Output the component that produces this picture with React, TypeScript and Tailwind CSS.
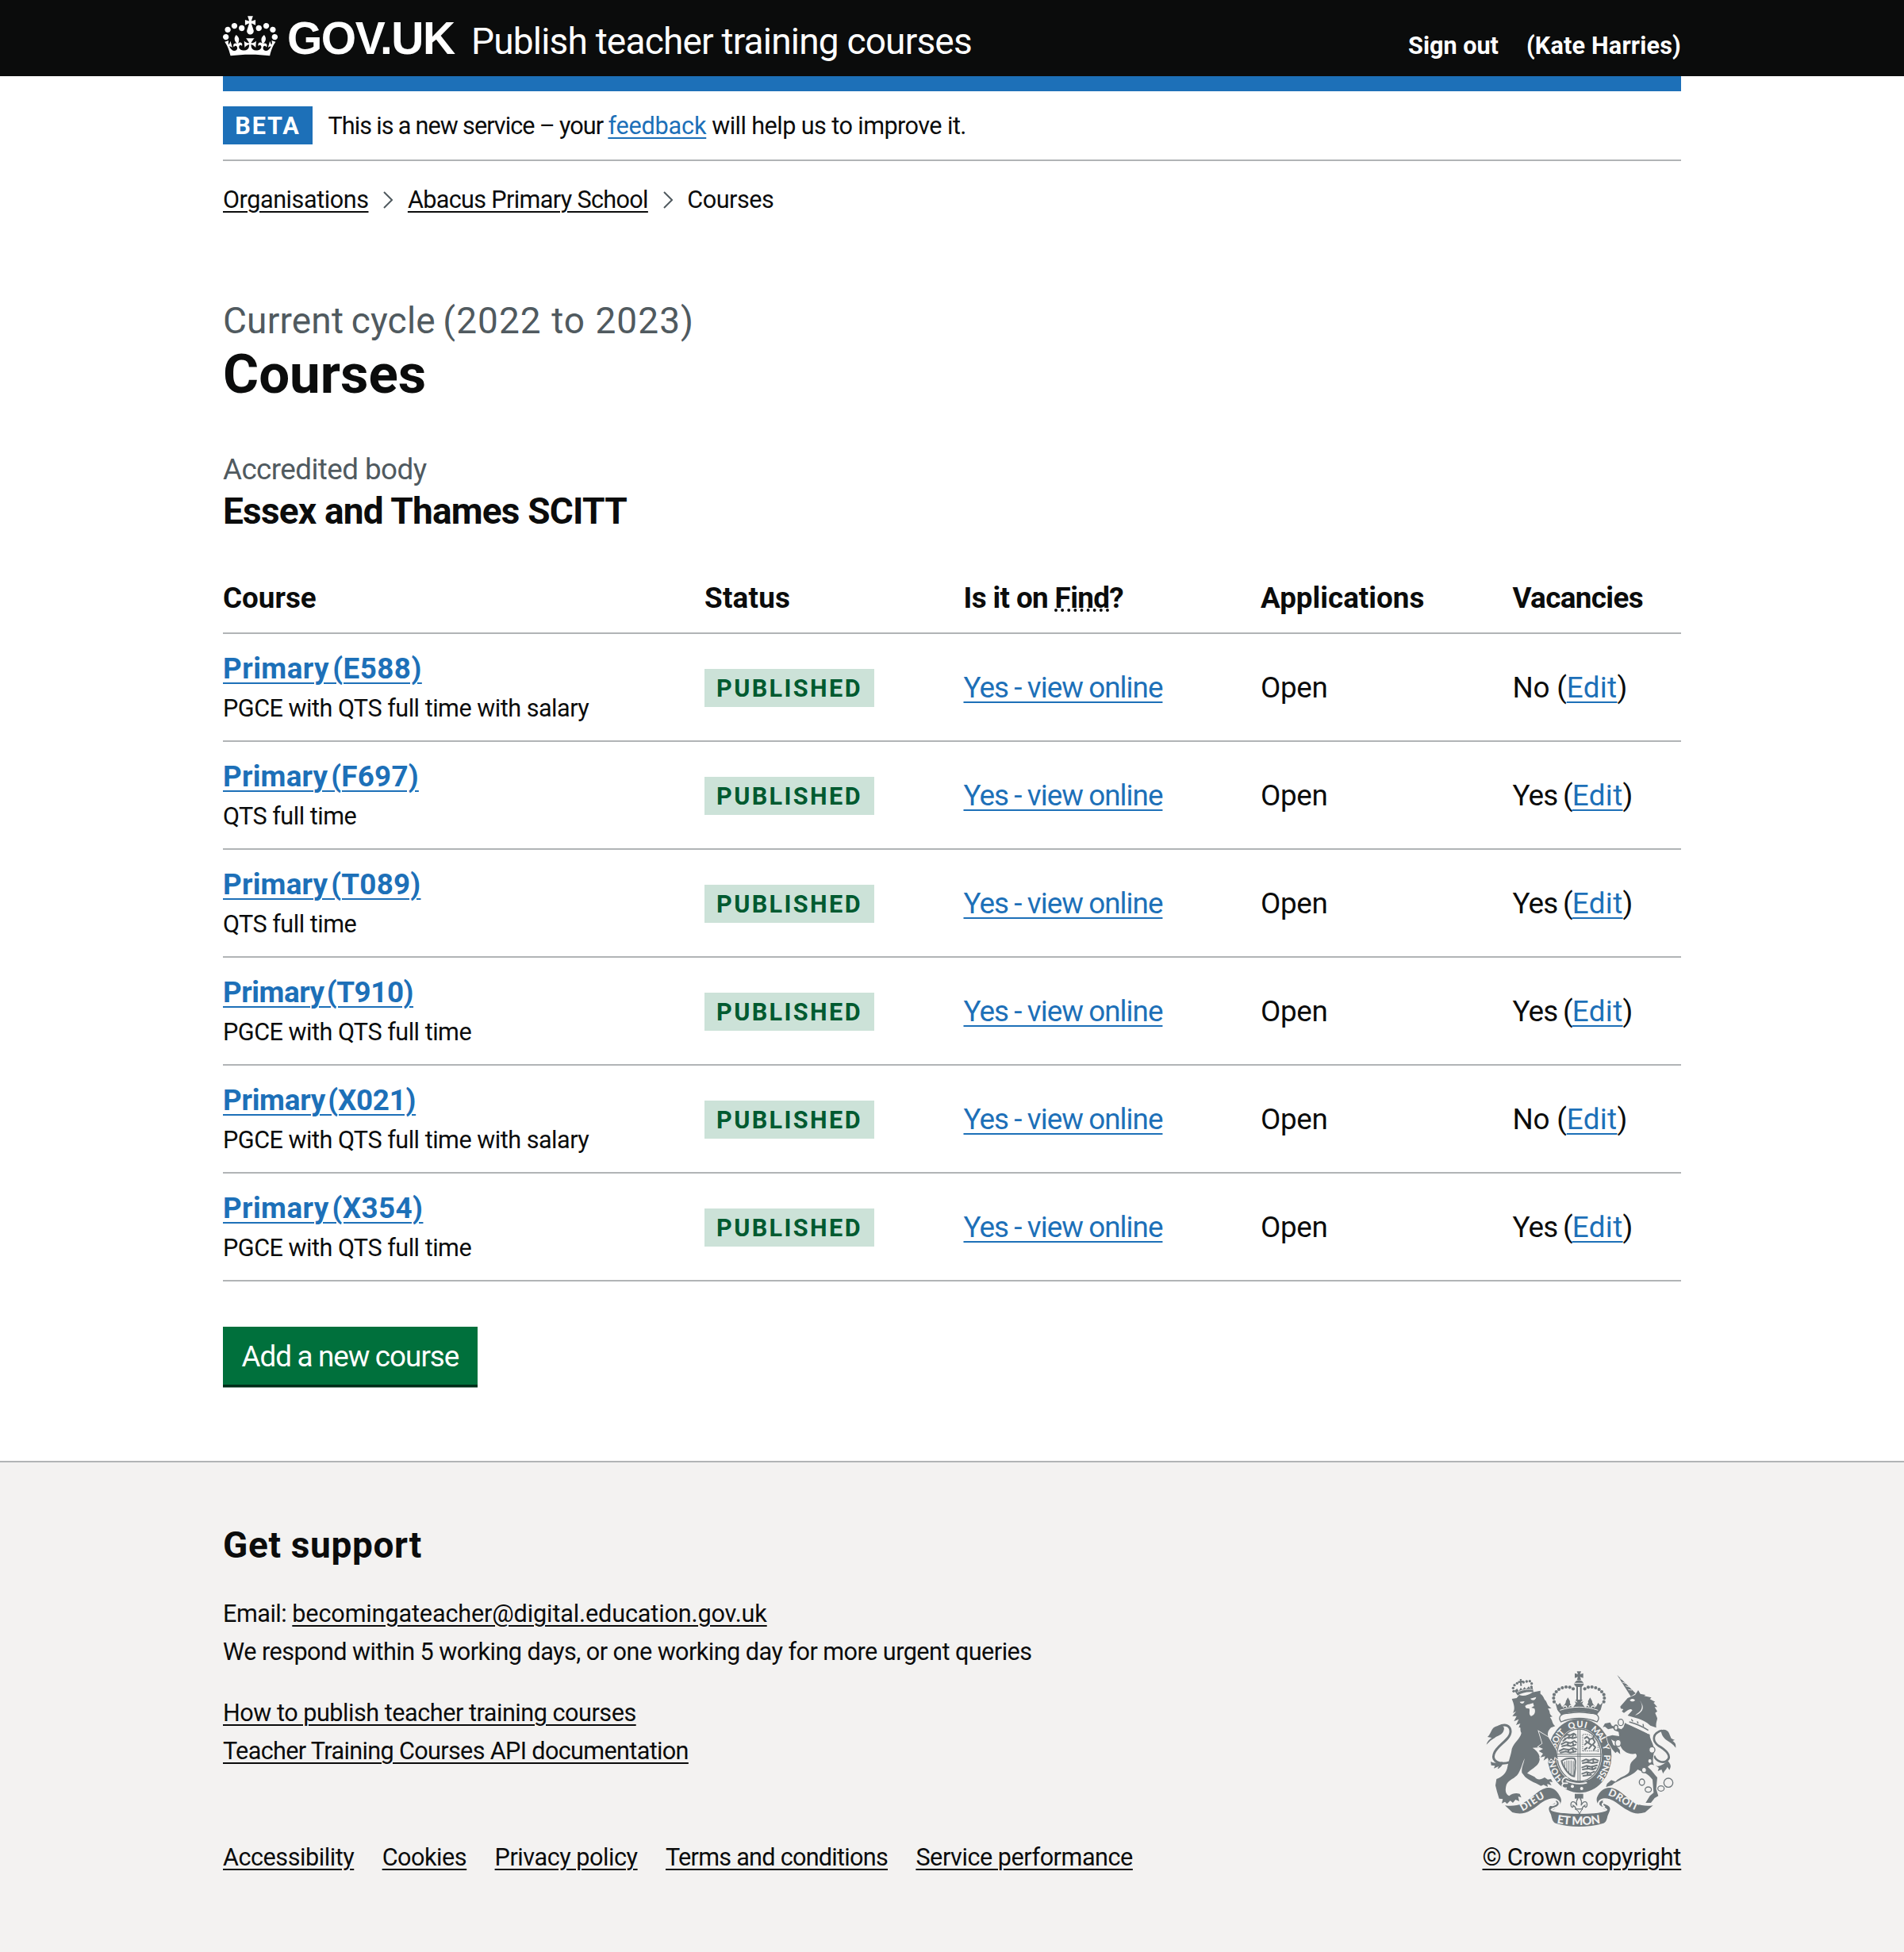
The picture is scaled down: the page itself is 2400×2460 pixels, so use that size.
import React from 'react';

const courses = [
  { name: 'Primary (E588)', tracking: 'tracking-[0.0127em]', detail: 'PGCE with QTS full time with salary', vacancies: 'No' },
  { name: 'Primary (F697)', tracking: 'tracking-[0.006em]', detail: 'QTS full time', vacancies: 'Yes' },
  { name: 'Primary (T089)', tracking: 'tracking-[0.006em]', detail: 'QTS full time', vacancies: 'Yes' },
  { name: 'Primary (T910)', tracking: 'tracking-[-0.0123em]', detail: 'PGCE with QTS full time', vacancies: 'Yes' },
  { name: 'Primary (X021)', tracking: 'tracking-[-0.0073em]', detail: 'PGCE with QTS full time with salary', vacancies: 'No' },
  { name: 'Primary (X354)', tracking: 'tracking-[0.0107em]', detail: 'PGCE with QTS full time', vacancies: 'Yes' },
];

const columns = 'grid grid-cols-[607px_326.5px_374.5px_317.5px_1fr]';
const link = 'underline decoration-2 underline-offset-[4px]';
const blueLink = 'text-[#1d70b8] underline decoration-2 underline-offset-[5px]';

function Crown() {
  return (
    <svg className="mt-5 h-[51px] w-[69px] shrink-0" viewBox="0 0 132 97" fill="white" aria-hidden="true">
      <path
        fillRule="evenodd"
        d="M25 30.2c3.5 1.5 7.7-.2 9.1-3.7 1.5-3.6-.2-7.8-3.9-9.2-3.6-1.4-7.6.3-9.1 3.9-1.4 3.5.3 7.5 3.9 9zM9 39.5c3.6 1.5 7.8-.2 9.2-3.7 1.5-3.6-.2-7.8-3.9-9.1-3.6-1.5-7.6.2-9.1 3.8-1.4 3.5.3 7.5 3.8 9zM4.4 57.2c3.5 1.5 7.7-.2 9.1-3.8 1.5-3.6-.2-7.7-3.9-9.1-3.5-1.5-7.6.3-9.1 3.8-1.4 3.5.3 7.6 3.9 9.1zm38.3-21.4c3.5 1.5 7.7-.2 9.1-3.8 1.5-3.6-.2-7.7-3.9-9.1-3.6-1.5-7.6.3-9.1 3.8-1.3 3.6.4 7.7 3.9 9.1zm64.4-5.6c-3.6 1.5-7.8-.2-9.1-3.7-1.5-3.6.2-7.8 3.8-9.2 3.6-1.4 7.7.3 9.2 3.9 1.3 3.5-.4 7.5-3.9 9zm15.9 9.3c-3.6 1.5-7.7-.2-9.1-3.7-1.5-3.6.2-7.8 3.7-9.1 3.6-1.5 7.7.2 9.2 3.8 1.5 3.5-.3 7.5-3.8 9zm4.7 17.7c-3.6 1.5-7.8-.2-9.2-3.8-1.5-3.6.2-7.7 3.9-9.1 3.6-1.5 7.7.3 9.2 3.8 1.3 3.5-.4 7.6-3.9 9.1zM89.3 35.8c-3.6 1.5-7.8-.2-9.2-3.8-1.4-3.6.2-7.7 3.9-9.1 3.6-1.5 7.7.3 9.2 3.8 1.4 3.6-.3 7.7-3.9 9.1zM69.7 17.7l8.9 4.7V9.3l-8.9 2.8c-.2-.3-.5-.6-.9-.9L72.4 0H59.6l3.5 11.2c-.3.3-.6.5-.9.9l-8.8-2.8v13.1l8.8-4.7c.3.3.6.7.9.9l-5 15.4v.1c-.2.8-.4 1.6-.4 2.4 0 4.1 3.1 7.5 7 8.1h.2c.3 0 .7.1 1 .1.4 0 .7 0 1-.1h.2c4-.6 7.1-4.1 7.1-8.1 0-.8-.1-1.7-.4-2.4V34l-5.1-15.4c.4-.2.7-.6 1-.9zM66 92.8c16.9 0 32.8 1.1 47.1 3.2 4-16.9 8.9-26.7 14-33.5l-9.6-3.4c1 4.9 1.1 7.2 0 10.2-1.5-1.4-3-4.3-4.2-8.7L108.6 76c2.8-2 5-3.2 7.5-3.3-4.4 9.4-10 11.9-13.6 11.2-4.3-.8-6.3-4.6-5.6-7.9 1-4.7 5.7-5.9 8-.5 4.3-8.7-3-11.4-7.6-8.8 7.1-7.2 7.9-13.5 2.1-21.1-8 6.1-8.1 12.3-4.5 20.8-4.7-5.4-12.1-2.5-9.5 6.2 3.4-5.2 7.9-2 7.2 3.1-.6 4.3-6.4 7.8-13.5 7.2-10.3-.9-10.9-8-11.2-13.8 2.5-.5 7.1 1.8 11 7.3L80.2 60c-4.1 4.4-8 5.3-12.3 5.4 1.4-4.4 8-11.6 8-11.6H55.5s6.4 7.2 7.9 11.6c-4.2-.1-8-1-12.3-5.4l1.4 16.4c3.9-5.5 8.5-7.7 10.9-7.3-.3 5.8-.9 12.8-11.1 13.8-7.2.6-12.9-2.9-13.5-7.2-.7-5 3.8-8.3 7.1-3.1 2.7-8.7-4.6-11.6-9.4-6.2 3.7-8.5 3.6-14.7-4.6-20.8-5.8 7.6-5 13.9 2.2 21.1-4.7-2.6-11.9.1-7.7 8.8 2.3-5.5 7.1-4.2 8.1.5.7 3.3-1.3 7.1-5.7 7.9-3.5.7-9-1.8-13.5-11.2 2.5.1 4.7 1.3 7.5 3.3l-4.7-15.4c-1.2 4.4-2.7 7.2-4.3 8.7-1.1-3-.9-5.3 0-10.2l-9.5 3.4c5 6.9 9.9 16.7 14 33.5 14.8-2.1 30.8-3.2 47.7-3.2z"
      />
    </svg>
  );
}

const archDots = [
  [328, 164], [326, 150], [328, 137], [336, 126], [346, 117], [359, 111], [373, 108], [387, 109], [400, 115],
];
const lionCrownDots = [
  [175, 124], [173, 112], [178, 101], [188, 94], [212, 90], [224, 87], [236, 86], [243, 95], [242, 108],
];
const garterWords: [string, string, number][] = [
  ['HONI', '0%', 88],
  ['SOIT', '24.5%', 70],
  ['QUI', '42%', 66],
  ['MAL', '58.5%', 64],
  ['Y', '73%', 20],
  ['PENSE', '80.5%', 94],
];

function RoyalArms() {
  const ink = '#6f777b';
  const paper = '#f3f2f1';
  return (
    <svg className="h-[198px] w-[240px]" viewBox="70 45 720 594" fill={ink} aria-hidden="true">
      {/* lion's tail */}
      <path d="M162 392C120 406 92 388 100 362C110 326 172 306 162 268C156 250 138 248 118 258" fill="none" stroke={ink} strokeWidth="9" />
      <path d="M72 326C76 312 84 306 92 300L76 297C92 284 88 262 112 256C128 252 142 256 138 270C134 290 112 292 104 300C92 306 84 314 72 326Z" />
      <path d="M88 390C106 400 120 390 134 392C134 404 126 412 114 418L118 408L100 416L104 406L90 404Z" />
      {/* lion */}
      <path d="M168 153L186 150L196 138C212 146 232 138 246 128L276 122L276 134C290 142 288 154 296 160C304 172 300 178 318 188L304 190C316 202 306 210 322 220L312 222C324 236 318 244 332 256L316 262C304 274 302 284 306 298L280 336L246 338C268 352 280 372 270 394C262 410 240 420 226 434L254 448C266 462 278 458 292 450L304 458L316 456L322 468L310 466L318 480L302 474L304 486L288 478L278 482C262 472 238 466 218 448L206 432C204 410 214 398 216 378C208 396 202 424 188 442C172 458 150 462 146 484C142 504 146 514 158 520C170 510 184 508 198 512L204 526L192 522L196 540L182 534L172 546L162 538L150 550L142 542L130 548L134 532L120 530L112 504L106 480L110 456C130 448 148 436 152 408C158 380 166 360 168 342C176 318 200 304 204 282C196 268 206 258 194 262L200 246L184 252L194 230L176 238L186 218L170 218L184 200L172 206C182 192 176 172 168 153Z" />
      <path d="M198 164L216 162C212 174 202 172 198 164ZM238 152L260 146C258 158 246 162 238 152ZM218 180C226 172 238 174 248 168L252 180L242 186L254 190C260 206 250 218 240 218C230 210 238 200 234 190L222 188Z" fill={paper} />
      {/* lion's crown */}
      <path d="M178 122L188 114L194 124L202 110L208 119L216 108L222 116L232 106L238 114L246 108L250 128C230 124 206 130 190 140Z" />
      <path d="M198 78L206 78L204 84L212 84L212 92L205 91L206 104L200 104L199 92L192 93L191 86L199 85Z" />
      {lionCrownDots.map(([x, y]) => <circle key={`${x}-${y}`} cx={x} cy={y} r="5" />)}
      <path d="M188 128C206 118 226 116 246 118" fill="none" stroke={paper} strokeWidth="2.5" />

      {/* garter */}
      <ellipse cx="424" cy="368" rx="125" ry="144" fill={paper} />
      <ellipse cx="424" cy="368" rx="121" ry="140" />
      <ellipse cx="422" cy="366" rx="87" ry="103" fill={paper} />
      <ellipse cx="422" cy="366" rx="83" ry="99" fill="none" stroke={ink} strokeWidth="4" />
      <path id="garter-line" d="M363 455A93 111 0 1 1 485 455" fill="none" />
      <g fill={paper} fontSize="33" fontWeight="900" className="font-['Lato']">
        {garterWords.map(([word, offset, length]) => (
          <text key={word}>
            <textPath href="#garter-line" startOffset={offset} textLength={length}>{word}</textPath>
          </text>
        ))}
      </g>
      {/* lion's forepaw */}
      <path d="M270 276L306 298L338 350L342 382L330 372L326 388L316 378L308 390L304 376L288 386L294 370L276 374L286 360L270 350L286 342L268 334L284 322Z" stroke={paper} strokeWidth="5" paintOrder="stroke" />
      {/* quartered shield */}
      <path d="M418 266V466M426 266V466M338 362H506M338 370H506" fill="none" stroke={ink} strokeWidth="3" />
      <g fill="none" stroke={ink} strokeWidth="6" strokeLinecap="round" strokeLinejoin="round">
        <path d="M366 296L376 288L390 290L402 284L410 290M368 304L384 298L398 302L412 298M362 312L370 306M356 324L372 316L390 320L404 312L412 318M358 332L376 328L392 332L410 326M348 350L364 342L384 346L400 338L412 344M352 356L372 352L388 356L410 352M384 292V302M380 318V330M382 344V354M400 290L396 300M398 318L402 330M398 344L402 354" />
        <path d="M434 388L448 382L462 386L478 380L494 386M436 396L454 392L472 396L492 392M434 412L450 406L468 410L490 404M436 420L456 416L474 420L486 414M434 436L450 430L466 434L480 428M438 444L454 442L468 440M456 384V394M476 384V394M454 408V418M472 408V418M454 432V442" />
        <path d="M444 302L452 296L462 306L474 302L482 316L474 326L484 336L478 346M462 306L458 320L470 328L460 340M452 318L444 326M452 338L444 344M474 302L480 292M458 320L448 312" />
      </g>
      <path d="M436 290V354M494 318V354M436 350H496M436 288C452 284 476 290 492 316" fill="none" stroke={ink} strokeWidth="3" strokeDasharray="5 3" />
      <path d="M356 388C366 382 374 376 404 378C414 388 404 398 408 414L404 446C388 446 362 414 356 388Z" fill="none" stroke={ink} strokeWidth="6" />
      <path d="M368 390V410M376 386V422M384 386V432M392 386V440M400 388V442" stroke={ink} strokeWidth="3" />
      {/* buckle and strap end */}
      <path d="M352 456C362 446 374 448 380 458L444 466L458 458C476 466 480 476 470 492C440 512 398 506 372 492C358 490 352 478 352 456Z" />
      <path d="M372 462C400 474 428 476 452 470M380 452C364 446 354 462 362 474C352 482 362 494 376 490M362 472H380" fill="none" stroke={paper} strokeWidth="5" />
      <circle cx="397" cy="484" r="6" fill={paper} />
      <circle cx="432" cy="492" r="6" fill={paper} />

      {/* royal crown */}
      <path d="M354 240C340 222 356 206 378 208C406 202 440 202 468 208C492 206 504 224 490 240C450 222 396 222 354 240Z" fill={paper} stroke={ink} strokeWidth="4" />
      <path d="M332 166L342 176L350 168L358 184L368 174L380 150L390 174L400 184L410 172L406 162L422 170L438 162L434 172L444 184L454 174L464 150L476 174L486 184L494 168L502 176L512 166L504 194C496 206 494 204 490 214C446 198 398 198 354 214C350 204 348 206 340 194Z" />
      <path d="M350 196C396 180 448 180 494 196" fill="none" stroke={paper} strokeWidth="3" />
      <path d="M362 186C366 176 374 178 376 186M384 184C388 174 396 178 398 186M446 186C448 176 458 174 460 184M468 186C472 176 480 178 482 186" fill="none" stroke={paper} strokeWidth="4" />
      <path d="M412 100H418V156H412ZM426 100H432V156H426ZM408 156H436L428 166L436 180H408L416 166Z" />
      <path d="M404 100A18 18 0 0 1 440 100L432 108H412Z" />
      <path d="M406 94H438" stroke={paper} strokeWidth="3" />
      <path d="M414 49H430L426 60L438 56V74L426 70L430 81H414L418 70L406 74V56L418 60Z" />
      {archDots.map(([x, y]) => (
        <g key={`${x}-${y}`}>
          <circle cx={x} cy={y} r="6.2" />
          <circle cx={844 - x} cy={y} r="6.2" />
        </g>
      ))}
      <path d="M380 148L388 162L384 178H376L372 162ZM464 148L472 162L468 178H460L456 162Z" />

      {/* unicorn's tail */}
      <path d="M706 368C716 392 740 396 752 388C780 370 744 342 722 330C700 314 700 290 722 278C730 272 740 272 748 280" fill="none" stroke={ink} strokeWidth="8" />
      <path d="M732 272C746 264 762 272 766 292C772 300 764 302 784 308L776 312C788 320 788 326 788 338C776 322 764 316 752 308C742 300 734 290 732 272Z" />
      <path d="M708 402C722 414 736 404 758 388C772 404 770 410 764 422L756 410C752 422 744 424 740 436L734 420L720 426L724 414Z" />
      {/* unicorn */}
      <path d="M566 62L636 132L618 144Z" />
      <path d="M576 76L590 82M586 90L600 95M598 104L612 108M608 118L622 120" stroke={paper} strokeWidth="2.5" />
      <path d="M578 182L606 150L634 138L646 120L654 134L674 138L668 142L696 148L690 154L710 164L704 168L718 184L708 184L718 200L710 206L718 226C718 236 712 240 714 262L692 254C662 226 632 226 606 216L624 196C616 186 606 196 592 206L584 200L590 192L580 190Z" />
      <path d="M614 158C620 150 630 152 634 158C628 164 620 164 614 158ZM652 160C666 178 662 198 640 210L634 216C662 206 674 186 652 160Z" fill={paper} />
      <path
        d="M596 244L690 288C688 304 704 320 706 346C706 366 696 384 706 404C690 396 688 406 682 410C698 424 704 434 718 450L714 494L722 520L708 528L694 546L674 546L690 520L704 508L700 458C684 436 664 430 644 420C628 440 606 446 584 456C572 466 562 464 546 480L524 486L528 474L544 460L560 466C578 446 598 446 610 432C618 420 610 404 622 390C630 380 648 372 636 360C612 366 580 350 576 320C560 314 552 312 544 306L552 328L562 330L576 346L578 362L566 352L560 358L548 344L532 318L526 296L548 290L574 294L572 278L558 272L550 264L532 268L520 258L512 260L520 246L540 242L546 254L562 260L582 268L590 260Z"
        stroke={paper}
        strokeWidth="5"
        paintOrder="stroke"
      />
      <path d="M604 218L616 228L622 222L632 236L646 234L652 248L666 242L670 256L684 256L694 266L684 286C660 270 630 258 600 246Z" fill={paper} />
      <path d="M612 240C640 248 664 258 684 272M620 230L626 238M642 238L646 246M664 248L666 258" fill="none" stroke={ink} strokeWidth="4" />
      {/* chain */}
      <g fill={paper} stroke={ink} strokeWidth="4">
        <ellipse cx="580" cy="242" rx="10" ry="12" />
        <ellipse cx="562" cy="262" rx="7" ry="10" />
        <ellipse cx="570" cy="320" rx="11" ry="13" />
        <ellipse cx="698" cy="346" rx="11" ry="12" />
        <ellipse cx="690" cy="388" rx="8" ry="9" />
        <ellipse cx="668" cy="422" rx="9" ry="10" />
        <ellipse cx="660" cy="468" rx="10" ry="12" />
        <ellipse cx="684" cy="496" rx="12" ry="10" />
        <ellipse cx="732" cy="492" rx="12" ry="10" />
        <circle cx="760" cy="470" r="17" />
      </g>

      {/* motto ribbon */}
      <path d="M142 556C168 560 190 556 206 550C246 530 262 500 298 490C324 484 340 500 352 526C362 546 344 560 322 574C340 590 500 592 524 574C500 560 484 546 490 526C500 500 520 484 548 490C584 500 600 530 640 550C656 556 678 560 702 556L672 582C650 588 632 590 606 574C570 554 560 536 530 530C506 530 504 546 530 556C548 566 536 580 530 596C526 616 520 622 512 624C460 640 384 640 336 624C322 620 320 606 316 590C306 572 304 562 318 554C344 544 340 530 314 530C284 536 270 556 240 574C214 590 190 588 170 582Z" />
      <path d="M308 536C330 524 356 540 346 556C338 568 322 564 318 572C340 588 506 588 526 572C520 562 506 568 498 556C488 540 514 524 538 536C548 546 536 552 524 548C508 544 506 554 520 562M308 536C298 544 308 556 322 556C340 552 338 544 330 544" fill="none" stroke={paper} strokeWidth="6" />
      <path id="motto-left" d="M208 578C240 564 266 538 306 522" fill="none" />
      <path id="motto-centre" d="M338 622C390 632 456 632 508 622" fill="none" />
      <path id="motto-right" d="M530 517C566 528 592 558 644 577" fill="none" />
      <g fill={paper} fontWeight="900" className="font-['Lato']">
        <text fontSize="38"><textPath href="#motto-left" textLength="100">DIEU</textPath></text>
        <text fontSize="44"><textPath href="#motto-centre" textLength="166">ET MON</textPath></text>
        <text fontSize="38"><textPath href="#motto-right" textLength="124">DROIT</textPath></text>
      </g>
      {/* fleur-de-lis */}
      <path d="M406 512H438V530H406Z" />
      <path d="M422 524C436 538 432 548 430 556C440 534 456 540 452 558C448 566 442 562 444 556C436 560 434 566 434 570H410C410 566 408 560 400 556C402 562 396 566 392 558C388 540 404 534 414 556C412 548 408 538 422 524Z" fill={paper} stroke={ink} strokeWidth="4" />
      <path d="M408 570H436L430 576L424 588L418 576Z" fill={paper} stroke={ink} strokeWidth="3" />
    </svg>
  );
}

function Chevron() {
  return (
    <svg className="mx-[18.7px] mt-[13px] h-[22px] w-[12px]" viewBox="0 0 12 22" fill="none" stroke="#505a5f" strokeWidth="2" aria-hidden="true">
      <path d="M1 1L11 11L1 21" />
    </svg>
  );
}

function Header() {
  return (
    <header className="h-24 bg-[#0b0c0c] text-white">
      <div className="mx-auto flex h-24 w-[1838px] items-start">
        <Crown />
        <span className="ml-[12px] w-[212px] whitespace-nowrap font-['Liberation_Sans'] text-[57px] font-bold leading-[96px] tracking-[-0.026em]">GOV.UK</span>
        <span className="ml-[20px] mt-1 text-[46px] leading-[96px] tracking-[-0.0175em]">Publish teacher training courses</span>
        <nav className="ml-auto mt-[10px] flex gap-[35px] text-[30.6px] font-bold leading-[96px]">
          <a>Sign out</a>
          <a className="tracking-[0.006em]">(Kate Harries)</a>
        </nav>
      </div>
    </header>
  );
}

function PhaseBanner() {
  return (
    <div className="flex h-[88px] items-center border-b-2 border-[#b1b4b6]">
      <strong className="flex h-12 w-[113px] items-center justify-center bg-[#1d70b8] pt-[3px] text-[30.6px] font-bold leading-none tracking-[0.062em] text-white">BETA</strong>
      <p className="ml-[19.5px] whitespace-nowrap pt-px text-[30.6px] leading-[48px]">
        <span className="tracking-[-0.031em] [word-spacing:-0.015em]">This is a new service – your </span>
        <a className="tracking-[-0.006em] text-[#1d70b8] underline decoration-2 underline-offset-[4px]">feedback</a>
        <span className="tracking-[-0.0185em]"> will help us to improve it.</span>
      </p>
    </div>
  );
}

function CourseTable() {
  return (
    <div className="mt-[37px] text-[36.8px]">
      <div className={`${columns} h-[90px] border-b-2 border-[#b1b4b6] pt-2 font-bold leading-[74px]`}>
        <div>Course</div>
        <div className="tracking-[0.006em]">Status</div>
        <div className="tracking-[-0.017em]">
          Is it on <span className="underline decoration-dotted decoration-4 underline-offset-[1px] [text-decoration-skip-ink:none]">Find</span>?
        </div>
        <div>Applications</div>
        <div className="tracking-[-0.017em]">Vacancies</div>
      </div>
      {courses.map((c) => (
        <div key={c.name} className={`${columns} h-[136px] items-center border-b-2 border-[#b1b4b6] pt-[2px]`}>
          <div>
            <a className={`${blueLink} ${c.tracking} block font-bold leading-[50px] [word-spacing:-0.15em]`}>{c.name}</a>
            <p className="text-[30.6px] leading-[49px] tracking-[-0.0162em]">{c.detail}</p>
          </div>
          <div className="flex">
            <strong className="flex h-12 w-[214px] items-center justify-center bg-[#cce2d8] pt-[2px] text-[30.6px] font-bold leading-none tracking-[0.078em] text-[#005a30]">PUBLISHED</strong>
          </div>
          <div className="leading-[50px]">
            <a className={`${blueLink} tracking-[-0.026em] [word-spacing:-0.025em]`}>Yes - view online</a>
          </div>
          <div className="leading-[50px] tracking-[-0.01em]">Open</div>
          <div className="leading-[50px]">
            <span className={c.vacancies === 'Yes' ? 'tracking-[-0.024em] [word-spacing:-0.04em]' : 'tracking-[-0.005em]'}>{c.vacancies} (</span>
            <a className={`${blueLink} tracking-[0.01em]`}>Edit</a>)
          </div>
        </div>
      ))}
    </div>
  );
}

function Footer() {
  return (
    <footer className="mt-[96px] h-[620px] border-t-2 border-[#b1b4b6] bg-[#f3f2f1]">
      <div className="mx-auto flex w-[1838px] items-end justify-between pt-[75px]">
        <div>
          <h2 className="text-[46px] font-bold leading-[58px] tracking-[0.014em]">Get support</h2>
          <div className="mt-[34px] text-[30.6px] leading-[48px]">
            <p><span className="tracking-[-0.016em]">Email: </span><a className={`${link} tracking-[-0.0045em]`}>becomingateacher@digital.education.gov.uk</a></p>
            <p className="tracking-[-0.0174em]">We respond within 5 working days, or one working day for more urgent queries</p>
            <p className="mt-[29px] tracking-[-0.0155em]"><a className={link}>How to publish teacher training courses</a></p>
            <p className="tracking-[-0.0213em]"><a className={link}>Teacher Training Courses API documentation</a></p>
          </div>
          <div className="mt-[86px] flex gap-[35.4px] text-[30.6px] leading-[48px] tracking-[-0.015em]">
            <a className={link}>Accessibility</a>
            <a className={link}>Cookies</a>
            <a className={link}>Privacy policy</a>
            <a className={`${link} tracking-[-0.0238em]`}>Terms and conditions</a>
            <a className={link}>Service performance</a>
          </div>
        </div>
        <div className="flex w-[250.5px] flex-col">
          <div className="ml-[4.5px]"><RoyalArms /></div>
          <a className={`${link} mt-[14px] whitespace-nowrap text-[30.6px] leading-[48px] tracking-[-0.005em]`}>© Crown copyright</a>
        </div>
      </div>
    </footer>
  );
}

export default function App() {
  return (
    <div className="h-[2460px] w-[2400px] overflow-hidden bg-white font-['Roboto',sans-serif] text-[#0b0c0c]">
      <Header />
      <div className="mx-auto w-[1838px]">
        <div className="h-[19px] bg-[#1d70b8]" />
        <PhaseBanner />
        <nav className="mt-[25px] flex text-[30.6px] leading-[48px]">
          <a className={`${link} tracking-[-0.0146em]`}>Organisations</a>
          <Chevron />
          <a className={`${link} tracking-[-0.0213em]`}>Abacus Primary School</a>
          <Chevron />
          <span className="tracking-[-0.016em]">Courses</span>
        </nav>
        <main>
          <h1 className="mt-[99px]">
            <span className="block text-[46px] leading-[59px] text-[#505a5f]">
              <span className="tracking-[0.004em] [word-spacing:-0.045em]">Current cycle </span>
              <span className="tracking-[0.0225em]">(2022 to 2023)</span>
            </span>
            <span className="block text-[69px] font-bold leading-[76px]">Courses</span>
          </h1>
          <h2 className="mt-[58px]">
            <span className="block text-[36.8px] leading-[48px] tracking-[-0.0155em] text-[#505a5f]">Accredited body</span>
            <span className="block text-[46px] font-bold leading-[56px] tracking-[-0.0175em]">Essex and Thames SCITT</span>
          </h2>
          <CourseTable />
          <button className="mt-[57px] block h-[73px] w-[321px] bg-[#00703c] pt-px text-center text-[36.8px] leading-[73px] tracking-[-0.027em] text-white shadow-[0_3.5px_0_#002d18] [word-spacing:-0.02em]">Add a new course</button>
        </main>
      </div>
      <Footer />
    </div>
  );
}
